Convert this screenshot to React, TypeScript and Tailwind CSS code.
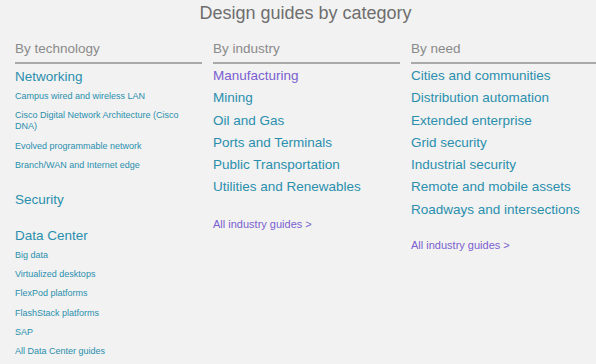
import React from "react";

const teal = "text-[#2a8fae]";
const purple = "text-[#7a5fd0]";

type Item = { label: string; visited?: boolean };

const industry: Item[] = [
  { label: "Manufacturing", visited: true },
  { label: "Mining" },
  { label: "Oil and Gas" },
  { label: "Ports and Terminals" },
  { label: "Public Transportation" },
  { label: "Utilities and Renewables" },
];

const need: Item[] = [
  { label: "Cities and communities" },
  { label: "Distribution automation" },
  { label: "Extended enterprise" },
  { label: "Grid security" },
  { label: "Industrial security" },
  { label: "Remote and mobile assets" },
  { label: "Roadways and intersections" },
];

const ColumnHeader: React.FC<{ title: string }> = ({ title }) => (
  <div className="border-b-2 border-[#a9a9a9] pb-[3px] text-[13.5px] leading-[20px] text-[#8a8a8a]">
    {title}
  </div>
);

const SubLinks: React.FC<{ items: string[] }> = ({ items }) => (
  <ul className="mt-[4px] flex flex-col gap-[8.3px]">
    {items.map((s) => (
      <li key={s} className={`text-[9px] leading-[11px] ${teal} pr-3`}>
        {s}
      </li>
    ))}
  </ul>
);

const BigList: React.FC<{ items: Item[] }> = ({ items }) => (
  <ul className="mt-[1px] flex flex-col">
    {items.map((it) => (
      <li
        key={it.label}
        className={`text-[13.5px] leading-[22.3px] ${it.visited ? purple : teal}`}
      >
        {it.label}
      </li>
    ))}
  </ul>
);

export default function App() {
  return (
    <div
      className="w-[596px] h-[364px] overflow-hidden bg-[#f2f2f2]"
      style={{ fontFamily: '"Liberation Sans", Arial, sans-serif' }}
    >
      <h1 className="pt-[1px] pl-[15px] text-center text-[18px] leading-[24px] text-[#6e6e6e] font-normal">
        Design guides by category
      </h1>
      <div className="mt-[14px] grid grid-cols-[187px_187px_185px] gap-x-[11px] pl-[15px]">
        <div>
          <ColumnHeader title="By technology" />
          <div className={`mt-[3px] text-[13.5px] leading-[20px] ${teal}`}>Networking</div>
          <SubLinks
            items={[
              "Campus wired and wireless LAN",
              "Cisco Digital Network Architecture (Cisco DNA)",
              "Evolved programmable network",
              "Branch/WAN and Internet edge",
            ]}
          />
          <div className={`mt-[19px] text-[13.5px] leading-[20px] ${teal}`}>Security</div>
          <div className={`mt-[16px] text-[13.5px] leading-[20px] ${teal}`}>Data Center</div>
          <SubLinks
            items={[
              "Big data",
              "Virtualized desktops",
              "FlexPod platforms",
              "FlashStack platforms",
              "SAP",
              "All Data Center guides",
            ]}
          />
        </div>
        <div>
          <ColumnHeader title="By industry" />
          <BigList items={industry} />
          <div className={`mt-[19px] text-[11px] leading-[12px] ${purple}`}>All industry guides &gt;</div>
        </div>
        <div>
          <ColumnHeader title="By need" />
          <BigList items={need} />
          <div className={`mt-[18px] text-[11px] leading-[12px] ${purple}`}>All industry guides &gt;</div>
        </div>
      </div>
    </div>
  );
}
